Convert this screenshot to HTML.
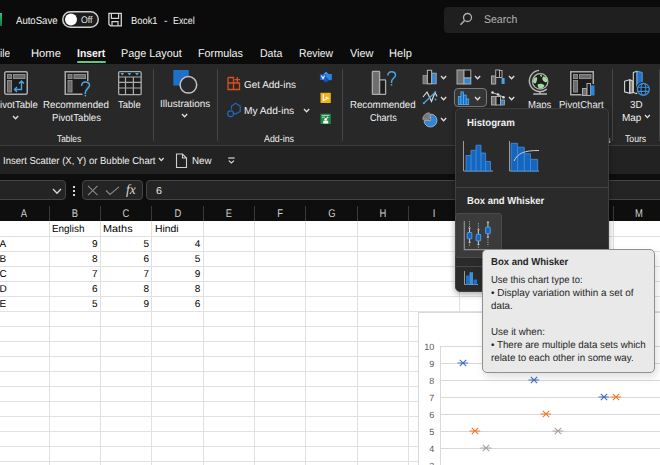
<!DOCTYPE html>
<html><head><meta charset="utf-8"><style>
html,body{margin:0;padding:0;width:660px;height:465px;overflow:hidden;background:#fff;font-family:"Liberation Sans",sans-serif}
.t{position:absolute;line-height:1;white-space:nowrap;text-rendering:geometricPrecision}
.r{position:absolute}
.s{position:absolute;overflow:visible}
</style></head><body>
<div class="r" style="left:0px;top:0px;width:660px;height:64px;background:#0b0b0b;"></div>
<div class="r" style="left:0px;top:12.6px;width:2px;height:13.4px;background:linear-gradient(#2fc27d,#0f7a3f);"></div>
<div class="t" style="left:15.5px;top:16.11px;font-size:10.5px;color:#f2f2f2;font-weight:400;transform:scaleX(0.9117);transform-origin:0 0;">AutoSave</div>
<svg class="s" style="left:62px;top:11px;" width="37" height="17" viewBox="0 0 37 17"><rect x="0.75" y="0.75" width="35.5" height="15.5" rx="7.75" fill="#1c1c1c" stroke="#cfcfcf" stroke-width="1.5"/><circle cx="9" cy="8.5" r="6" fill="#fff"/></svg>
<div class="t" style="left:81.0px;top:16.47px;font-size:9.6px;color:#e8e8e8;font-weight:400;transform:scaleX(0.9075);transform-origin:0 0;">Off</div>
<svg class="s" style="left:107px;top:12px;" width="16" height="16" viewBox="0 0 16 16"><path d="M1.9 1.4 H14.3 V13.8 H3.5 L1.9 12.2 Z" fill="none" stroke="#d6d6d6" stroke-width="1.3"/><path d="M4.4 1.4 V6.4 H11.6 V1.4" fill="none" stroke="#d6d6d6" stroke-width="1.2"/><path d="M5 13.8 V9.6 H11 V13.8" fill="none" stroke="#d6d6d6" stroke-width="1.2"/></svg>
<div class="t" style="left:131.0px;top:16.58px;font-size:10.3px;color:#f2f2f2;font-weight:400;transform:scaleX(0.9075);transform-origin:0 0;">Book1</div>
<div class="t" style="left:164.0px;top:16.58px;font-size:10.3px;color:#f2f2f2;font-weight:400;transform:scaleX(1.0143);transform-origin:0 0;">-</div>
<div class="t" style="left:173.3px;top:16.58px;font-size:10.3px;color:#f2f2f2;font-weight:400;transform:scaleX(0.8617);transform-origin:0 0;">Excel</div>
<div class="r" style="left:444px;top:7px;width:230px;height:25.5px;background:#1f1f1f;border-radius:4px"></div>
<svg class="s" style="left:459px;top:12px;" width="14" height="15" viewBox="0 0 14 15"><circle cx="8.5" cy="5.5" r="4" fill="none" stroke="#b0b0b0" stroke-width="1.3"/><path d="M5.6 8.4 L1.5 12.8" stroke="#b0b0b0" stroke-width="1.4"/></svg>
<div class="t" style="left:483.7px;top:14.92px;font-size:11.2px;color:#b4b4b4;font-weight:400;transform:scaleX(0.9379);transform-origin:0 0;">Search</div>
<div class="t" style="left:0.0px;top:49.33px;font-size:11.3px;color:#f4f4f4;font-weight:400;transform:scaleX(0.885);transform-origin:0 0;">ile</div>
<div class="t" style="left:31.0px;top:49.33px;font-size:11.3px;color:#f4f4f4;font-weight:400;transform:scaleX(0.9943);transform-origin:0 0;">Home</div>
<div class="t" style="left:77.0px;top:49.33px;font-size:11.3px;color:#f4f4f4;font-weight:700;transform:scaleX(0.9191);transform-origin:0 0;">Insert</div>
<div class="t" style="left:121.3px;top:49.33px;font-size:11.3px;color:#f4f4f4;font-weight:400;transform:scaleX(0.9567);transform-origin:0 0;">Page Layout</div>
<div class="t" style="left:198.3px;top:49.33px;font-size:11.3px;color:#f4f4f4;font-weight:400;transform:scaleX(0.955);transform-origin:0 0;">Formulas</div>
<div class="t" style="left:259.7px;top:49.33px;font-size:11.3px;color:#f4f4f4;font-weight:400;transform:scaleX(0.9331);transform-origin:0 0;">Data</div>
<div class="t" style="left:298.9px;top:49.33px;font-size:11.3px;color:#f4f4f4;font-weight:400;transform:scaleX(0.92);transform-origin:0 0;">Review</div>
<div class="t" style="left:349.5px;top:49.33px;font-size:11.3px;color:#f4f4f4;font-weight:400;transform:scaleX(0.9673);transform-origin:0 0;">View</div>
<div class="t" style="left:388.8px;top:49.33px;font-size:11.3px;color:#f4f4f4;font-weight:400;transform:scaleX(0.9818);transform-origin:0 0;">Help</div>
<div class="r" style="left:77px;top:60.5px;width:29px;height:2px;background:#5fc97f;border-radius:1px"></div>
<div class="r" style="left:0px;top:64px;width:660px;height:81px;background:#282828;"></div>
<div class="r" style="left:0px;top:145px;width:660px;height:1px;background:#3c3c3c;"></div>
<div class="r" style="left:153px;top:69px;width:1px;height:72px;background:#454545;"></div>
<div class="r" style="left:217px;top:69px;width:1px;height:72px;background:#454545;"></div>
<div class="r" style="left:341.5px;top:69px;width:1px;height:72px;background:#454545;"></div>
<div class="r" style="left:612px;top:69px;width:1px;height:72px;background:#454545;"></div>
<div class="r" style="left:659px;top:69px;width:1px;height:72px;background:#454545;"></div>
<svg class="s" style="left:3px;top:70px;" width="27" height="27" viewBox="0 0 27 27"><rect x="1.75" y="1.75" width="22.5" height="22.5" rx="1.5" fill="#1c1c1c" stroke="#ababab" stroke-width="1.5"/><rect x="4.5" y="4.5" width="4" height="4" fill="#6b6b6b" stroke="#8a8a8a" stroke-width="1"/><rect x="10.5" y="4.5" width="11.5" height="4" fill="#6b6b6b" stroke="#8a8a8a" stroke-width="1"/><rect x="4.5" y="10.5" width="4" height="11.5" fill="#6b6b6b" stroke="#8a8a8a" stroke-width="1"/><path d="M18.5 11 V19.5 H12 M16 13.5 L18.5 11 L21 13.5 M14 17 L11.5 19.5 L14 22" fill="none" stroke="#4ba3e3" stroke-width="1.4"/></svg>
<svg class="s" style="left:63px;top:70px;" width="30" height="28" viewBox="0 0 30 28"><path d="M19.5 24.25 H2.25 V1.75 H24.75 V11" fill="#1c1c1c" stroke="#ababab" stroke-width="1.5"/><rect x="5" y="4.5" width="4" height="4" fill="#6b6b6b" stroke="#8a8a8a" stroke-width="1"/><rect x="11" y="4.5" width="11.5" height="4" fill="#6b6b6b" stroke="#8a8a8a" stroke-width="1"/><rect x="5" y="10.5" width="4" height="11.5" fill="#6b6b6b" stroke="#8a8a8a" stroke-width="1"/><path d="M18.6 16 C18.6 13 20.5 12 22.5 12 C24.8 12 26.5 13.5 26.5 15.6 C26.5 18 22.4 19 22.4 22.5 V24" fill="none" stroke="#4ba3e3" stroke-width="1.5"/><circle cx="22.4" cy="25.6" r="0.9" fill="#4ba3e3"/></svg>
<svg class="s" style="left:117px;top:70px;" width="26" height="27" viewBox="0 0 26 27"><rect x="1.65" y="1.65" width="22.5" height="23" rx="1.2" fill="#1c1c1c" stroke="#ababab" stroke-width="1.3"/><path d="M1.5 7 H24.3 M1.5 12.4 H24.3 M1.5 18 H24.3 M8.5 7 V24.6 M16.4 7 V24.6" stroke="#ababab" stroke-width="1.2"/><path d="M3.3 3 H7.3 L5.3 5.6 Z M10.4 3 H14.4 L12.4 5.6 Z M18 3 H22 L20 5.6 Z" fill="#4ba3e3"/></svg>
<svg class="s" style="left:172px;top:69px;" width="27" height="26" viewBox="0 0 27 26"><rect x="1.3" y="1" width="15.5" height="15.5" fill="#1f70c8"/><circle cx="16.4" cy="15.8" r="8.3" fill="#282828" stroke="#c4c4c4" stroke-width="1.5"/></svg>
<svg class="s" style="left:226px;top:76px;" width="16" height="15" viewBox="0 0 16 15"><path d="M2 7 H7.5 V13.5 H2 Z M2 1.5 H7.5 V7 M7.5 7 H13.5 V13.5 H7.5 M2 1.5 V7" fill="none" stroke="#d9501e" stroke-width="1.3"/><path d="M11.3 1 V6.5 M8.6 3.7 H14" stroke="#d9501e" stroke-width="1.3"/></svg>
<svg class="s" style="left:226px;top:102px;" width="16" height="16" viewBox="0 0 16 16"><path d="M9.5 1.3 L14.2 4 V9.4 L9.5 12.1 L7 10.7 M5.5 7.6 V4 L9.5 1.3" fill="none" stroke="#1f6bbf" stroke-width="1.15"/><circle cx="4.6" cy="11.7" r="2.9" fill="none" stroke="#1f6bbf" stroke-width="1.15"/></svg>
<svg class="s" style="left:319px;top:71px;" width="14" height="13" viewBox="0 0 14 13"><path d="M7 0.7 L10.2 3.6 L7 6.5 L3.8 3.6 Z" fill="#3ea2f2"/><rect x="7" y="3" width="5.8" height="6.2" fill="#2a86e6"/><path d="M7 6 L10.2 8.9 L7 11.8 L3.8 8.9 Z" fill="#1553b8"/><rect x="0.9" y="3.2" width="6.2" height="5.7" rx="0.5" fill="#1b5fcc"/><path d="M2.4 4.5 L4 7.8 L5.6 4.5" fill="none" stroke="#f0f4ff" stroke-width="1.1"/></svg>
<svg class="s" style="left:320px;top:92px;" width="11" height="12" viewBox="0 0 11 12"><rect x="0.5" y="0.8" width="10.3" height="10.3" rx="0.5" fill="#f2b318"/><path d="M3.3 2.3 V8.6 L8 6.3 L5.6 5.1" fill="none" stroke="#fff" stroke-width="1.2"/></svg>
<svg class="s" style="left:320px;top:113px;" width="11" height="12" viewBox="0 0 11 12"><rect x="0.5" y="0.8" width="10.3" height="10.3" rx="0.5" fill="#1f8a4c"/><path d="M1.8 2.4 H9.4 M1.8 4.2 H5 M7.5 3.5 V5.5 M6.5 4.5 H8.5" stroke="#dff3e7" stroke-width="0.7"/><circle cx="5.7" cy="6.2" r="1.3" fill="#fff"/><path d="M3.2 10.6 V8.6 C3.2 7.8 4 7.4 5.7 7.4 C7.4 7.4 8.2 7.8 8.2 8.6 V10.6 Z" fill="#fff"/></svg>
<svg class="s" style="left:371px;top:70px;" width="26" height="26" viewBox="0 0 26 26"><rect x="1.4" y="1.4" width="7.2" height="23" rx="0.6" fill="#6e6e6e" stroke="#ababab" stroke-width="1.3"/><rect x="8.6" y="9.8" width="6" height="14.6" rx="0.6" fill="#1c1c1c" stroke="#ababab" stroke-width="1.3"/><path d="M16.8 5.5 C16.8 3 18.5 1.8 20.6 1.8 C23 1.8 24.5 3.3 24.5 5.3 C24.5 7.8 20.5 8.5 20.5 12 V13" fill="none" stroke="#4ba3e3" stroke-width="1.5"/><circle cx="20.5" cy="14.8" r="0.9" fill="#4ba3e3"/></svg>
<svg class="s" style="left:422px;top:69px;" width="16" height="16" viewBox="0 0 16 16"><rect x="1" y="6.5" width="4.2" height="8.3" fill="#777" stroke="#999" stroke-width="0.8"/><rect x="5.4" y="1.3" width="4.2" height="13.5" fill="#1c1c1c" stroke="#ababab" stroke-width="1.1"/><rect x="9.8" y="4.2" width="4.4" height="10.6" fill="#2f86d8" stroke="#ababab" stroke-width="0.9"/></svg>
<svg class="s" style="left:439.9px;top:75.0px;" width="7.2" height="4.8" viewBox="0 0 7.2 4.8"><path d="M1 1 L3.6 3.8 L6.2 1" fill="none" stroke="#e0e0e0" stroke-width="1.3"/></svg>
<svg class="s" style="left:422px;top:90px;" width="16" height="16" viewBox="0 0 16 16"><path d="M1 7 L5 2 L9.5 11.5 L13 2.5 L15 6.5" fill="none" stroke="#d8d8d8" stroke-width="1.2"/><path d="M1.5 13.5 L14 1.5" stroke="#4ba3e3" stroke-width="1.3"/><circle cx="1.8" cy="13.2" r="1" fill="#4ba3e3"/><circle cx="13.5" cy="9.5" r="1" fill="#4ba3e3"/></svg>
<svg class="s" style="left:439.9px;top:96.0px;" width="7.2" height="4.8" viewBox="0 0 7.2 4.8"><path d="M1 1 L3.6 3.8 L6.2 1" fill="none" stroke="#e0e0e0" stroke-width="1.3"/></svg>
<svg class="s" style="left:422px;top:112px;" width="16" height="16" viewBox="0 0 16 16"><path d="M7.3 7.3 V0.8 A6.5 6.5 0 0 0 0.8 7.3 Z" fill="#777" stroke="#aaa" stroke-width="0.8"/><path d="M8.6 2 A6.5 6.5 0 1 1 2 8.6 H8.6 Z" fill="#2f86d8" stroke="#bbb" stroke-width="0.8"/></svg>
<svg class="s" style="left:439.9px;top:116.69999999999999px;" width="7.2" height="4.8" viewBox="0 0 7.2 4.8"><path d="M1 1 L3.6 3.8 L6.2 1" fill="none" stroke="#e0e0e0" stroke-width="1.3"/></svg>
<svg class="s" style="left:456px;top:69px;" width="16" height="16" viewBox="0 0 16 16"><rect x="1" y="1" width="7" height="14" fill="#6e6e6e" stroke="#ababab" stroke-width="1"/><rect x="8" y="1" width="6.8" height="8" fill="#1c1c1c" stroke="#ababab" stroke-width="1"/><rect x="8" y="9" width="6.8" height="6" fill="#2f86d8" stroke="#ababab" stroke-width="1"/></svg>
<svg class="s" style="left:474.4px;top:75.0px;" width="7.2" height="4.8" viewBox="0 0 7.2 4.8"><path d="M1 1 L3.6 3.8 L6.2 1" fill="none" stroke="#e0e0e0" stroke-width="1.3"/></svg>
<svg class="s" style="left:490px;top:69px;" width="16" height="16" viewBox="0 0 16 16"><rect x="1.5" y="7" width="4.2" height="8" fill="#6e6e6e" stroke="#ababab" stroke-width="1"/><rect x="5.7" y="1" width="3.8" height="7.5" fill="#1c1c1c" stroke="#ababab" stroke-width="1"/><rect x="9.5" y="1.5" width="2.5" height="7" fill="#1c1c1c" stroke="#ababab" stroke-width="1"/><rect x="11.6" y="9" width="3" height="6" fill="#4ba3e3"/></svg>
<svg class="s" style="left:508.4px;top:75.0px;" width="7.2" height="4.8" viewBox="0 0 7.2 4.8"><path d="M1 1 L3.6 3.8 L6.2 1" fill="none" stroke="#e0e0e0" stroke-width="1.3"/></svg>
<div class="r" style="left:454.3px;top:88.2px;width:32.3px;height:19.2px;background:#353535;border:1px solid #7a7a7a;border-radius:4px;box-sizing:border-box"></div>
<svg class="s" style="left:457px;top:90px;" width="14" height="16" viewBox="0 0 14 16"><rect x="1.3" y="6.6" width="2.6" height="8" fill="#1a6cc0" stroke="#5ab0f0" stroke-width="0.8"/><rect x="3.9" y="1.9" width="2.6" height="12.7" fill="#1a6cc0" stroke="#5ab0f0" stroke-width="0.8"/><rect x="6.5" y="5.1" width="2.7" height="9.5" fill="#1a6cc0" stroke="#5ab0f0" stroke-width="0.8"/><rect x="9.2" y="9" width="2.5" height="5.6" fill="#1a6cc0" stroke="#5ab0f0" stroke-width="0.8"/></svg>
<svg class="s" style="left:474.4px;top:96.1px;" width="7.2" height="4.8" viewBox="0 0 7.2 4.8"><path d="M1 1 L3.6 3.8 L6.2 1" fill="none" stroke="#e0e0e0" stroke-width="1.3"/></svg>
<svg class="s" style="left:490px;top:90px;" width="16" height="16" viewBox="0 0 16 16"><rect x="1.5" y="6.5" width="4.5" height="8.5" fill="#6e6e6e" stroke="#ababab" stroke-width="1"/><rect x="6" y="6.5" width="4.5" height="8.5" fill="#1c1c1c" stroke="#ababab" stroke-width="1"/><rect x="10.5" y="10" width="4" height="5" fill="#2f86d8" stroke="#ababab" stroke-width="0.8"/><path d="M2 2.5 L8 4.5 L14 7.5" stroke="#c8c8c8" stroke-width="1"/><circle cx="2.5" cy="2.5" r="1.3" fill="#ddd"/><circle cx="8" cy="4.5" r="1.3" fill="#ddd"/><circle cx="13.5" cy="7.3" r="1.3" fill="#ddd"/></svg>
<svg class="s" style="left:508.4px;top:96.1px;" width="7.2" height="4.8" viewBox="0 0 7.2 4.8"><path d="M1 1 L3.6 3.8 L6.2 1" fill="none" stroke="#e0e0e0" stroke-width="1.3"/></svg>
<svg class="s" style="left:526px;top:68px;" width="26" height="28" viewBox="0 0 26 28"><circle cx="14.2" cy="13.4" r="7.7" fill="#1e1e1e" stroke="#b8b8b8" stroke-width="1.2"/><path d="M13.1 2.4 A10.6 10.6 0 1 0 20.8 21.1" fill="none" stroke="#b8b8b8" stroke-width="1.4"/><path d="M14 23.6 V26 M7.2 26.1 H21" stroke="#b8b8b8" stroke-width="1.5"/><path d="M14 7 C15.5 6.5 16.5 7.2 16 8.5 C15 9 14.2 8.5 14 7Z M17 8.5 C19 8 21.3 10 21.5 12.5 C21 15 19 14.5 17.5 13 C16 12 16 10 17 8.5Z M7.5 11 C8.5 9.5 10 9 11 9.5 C11.5 11 10.8 13 10 15 C9 16 7.5 15 7 13.5Z M11.5 16.5 C13.5 15.5 17 15.5 18.5 17.5 C18 19.5 16 20.8 13.5 20.6 C12 19.5 11.5 18 11.5 16.5Z" fill="#9fdc9f"/></svg>
<svg class="s" style="left:569px;top:70px;" width="27" height="27" viewBox="0 0 27 27"><path d="M12.5 24.75 H1.75 V1.75 H24.25 V14" fill="#1c1c1c" stroke="#ababab" stroke-width="1.5"/><rect x="4.5" y="4.5" width="4" height="4" fill="#6b6b6b" stroke="#8a8a8a" stroke-width="1"/><rect x="10.5" y="4.5" width="11.5" height="4" fill="#6b6b6b" stroke="#8a8a8a" stroke-width="1"/><rect x="4.5" y="10.5" width="4" height="11.5" fill="#6b6b6b" stroke="#8a8a8a" stroke-width="1"/><rect x="13.5" y="18.5" width="4.5" height="7" fill="#6e6e6e" stroke="#ababab" stroke-width="1"/><rect x="18" y="13.5" width="3.5" height="12" fill="#1c1c1c" stroke="#ababab" stroke-width="1"/><rect x="21.5" y="15.5" width="4" height="10" fill="#2f86d8"/></svg>
<svg class="s" style="left:620px;top:68px;" width="32" height="30" viewBox="0 0 32 30"><path d="M4.6 13.2 L9.7 11.7 V25.2 L4.6 23.9 Z" fill="#1c1c1c" stroke="#d4d4d4" stroke-width="1.1" stroke-linejoin="round"/><path d="M9.7 11.7 L12.9 12.9 V24.6 L9.7 25.2 Z" fill="#7a7a7a" stroke="#d4d4d4" stroke-width="1.1" stroke-linejoin="round"/><path d="M13.3 4.5 L17.1 3.2 V25.8 L13.3 24.6 Z" fill="#1c1c1c" stroke="#d4d4d4" stroke-width="1.1" stroke-linejoin="round"/><path d="M17.1 3.2 L22.2 4.5 V19 L17.1 22 Z" fill="#1f72c8" stroke="#5aa7ee" stroke-width="0.9" stroke-linejoin="round"/><circle cx="23.4" cy="21.3" r="6.6" fill="#1c1c1c" stroke="#282828" stroke-width="2"/><circle cx="23.4" cy="21.3" r="5.9" fill="#1c1c1c" stroke="#3d8fdb" stroke-width="1.3"/><ellipse cx="23.4" cy="21.3" rx="2.4" ry="5.9" fill="none" stroke="#3d8fdb" stroke-width="1.1"/><path d="M17.8 19.2 H29 M17.8 23.4 H29" stroke="#3d8fdb" stroke-width="1.1"/></svg>
<div class="t" style="left:0.0px;top:100.65px;font-size:10.1px;color:#f0f0f0;font-weight:400;transform:scaleX(0.9487);transform-origin:0 0;">ivotTable</div>
<svg class="s" style="left:11.9px;top:114.6px;" width="7.2" height="4.8" viewBox="0 0 7.2 4.8"><path d="M1 1 L3.6 3.8 L6.2 1" fill="none" stroke="#e0e0e0" stroke-width="1.3"/></svg>
<div class="t" style="left:42.9px;top:100.65px;font-size:10.1px;color:#f0f0f0;font-weight:400;transform:scaleX(0.9624);transform-origin:0 0;">Recommended</div>
<div class="t" style="left:52.0px;top:113.65px;font-size:10.1px;color:#f0f0f0;font-weight:400;transform:scaleX(0.9485);transform-origin:0 0;">PivotTables</div>
<div class="t" style="left:118.0px;top:100.65px;font-size:10.1px;color:#f0f0f0;font-weight:400;transform:scaleX(0.9404);transform-origin:0 0;">Table</div>
<div class="t" style="left:56.7px;top:134.60px;font-size:9.8px;color:#f0f0f0;font-weight:400;transform:scaleX(0.8545);transform-origin:0 0;">Tables</div>
<div class="t" style="left:159.8px;top:99.65px;font-size:10.1px;color:#f0f0f0;font-weight:400;transform:scaleX(0.9823);transform-origin:0 0;">Illustrations</div>
<svg class="s" style="left:181.0px;top:113.3px;" width="7.2" height="4.8" viewBox="0 0 7.2 4.8"><path d="M1 1 L3.6 3.8 L6.2 1" fill="none" stroke="#e0e0e0" stroke-width="1.3"/></svg>
<div class="t" style="left:244.2px;top:80.75px;font-size:10.1px;color:#f0f0f0;font-weight:400;transform:scaleX(0.9835);transform-origin:0 0;">Get Add-ins</div>
<div class="t" style="left:244.0px;top:107.25px;font-size:10.1px;color:#f0f0f0;font-weight:400;transform:scaleX(1.0051);transform-origin:0 0;">My Add-ins</div>
<svg class="s" style="left:303.0px;top:107.6px;" width="7.2" height="4.8" viewBox="0 0 7.2 4.8"><path d="M1 1 L3.6 3.8 L6.2 1" fill="none" stroke="#e0e0e0" stroke-width="1.3"/></svg>
<div class="t" style="left:264.2px;top:134.60px;font-size:9.8px;color:#f0f0f0;font-weight:400;transform:scaleX(0.903);transform-origin:0 0;">Add-ins</div>
<div class="t" style="left:350.4px;top:100.85px;font-size:10.1px;color:#f0f0f0;font-weight:400;transform:scaleX(0.958);transform-origin:0 0;">Recommended</div>
<div class="t" style="left:370.0px;top:113.95px;font-size:10.1px;color:#f0f0f0;font-weight:400;transform:scaleX(0.8976);transform-origin:0 0;">Charts</div>
<div class="t" style="left:528.0px;top:100.95px;font-size:10.1px;color:#f0f0f0;font-weight:400;transform:scaleX(0.9476);transform-origin:0 0;">Maps</div>
<div class="t" style="left:559.2px;top:100.95px;font-size:10.1px;color:#f0f0f0;font-weight:400;transform:scaleX(0.9456);transform-origin:0 0;">PivotChart</div>
<div class="t" style="left:630.0px;top:100.85px;font-size:10.1px;color:#f0f0f0;font-weight:400;transform:scaleX(0.9746);transform-origin:0 0;">3D</div>
<div class="t" style="left:621.8px;top:113.65px;font-size:10.1px;color:#f0f0f0;font-weight:400;transform:scaleX(0.9876);transform-origin:0 0;">Map</div>
<svg class="s" style="left:643.6px;top:114.3px;" width="6.8" height="4.6" viewBox="0 0 6.8 4.6"><path d="M1 1 L3.4 3.6 L5.8 1" fill="none" stroke="#e0e0e0" stroke-width="1.3"/></svg>
<div class="t" style="left:625.0px;top:134.60px;font-size:9.8px;color:#f0f0f0;font-weight:400;transform:scaleX(0.8848);transform-origin:0 0;">Tours</div>
<div class="t" style="right:49.5px;top:135.77px;font-size:8.9px;color:#f0f0f0;font-weight:400;">Charts</div>
<div class="r" style="left:0px;top:146px;width:660px;height:28px;background:#222222;"></div>
<div class="t" style="left:3.4px;top:156.65px;font-size:10.1px;color:#f0f0f0;font-weight:400;transform:scaleX(0.9417);transform-origin:0 0;">Insert Scatter (X, Y) or Bubble Chart</div>
<svg class="s" style="left:158.29999999999998px;top:157.29999999999998px;" width="6.6" height="4.6" viewBox="0 0 6.6 4.6"><path d="M1 1 L3.3 3.6 L5.6 1" fill="none" stroke="#e0e0e0" stroke-width="1.3"/></svg>
<svg class="s" style="left:175px;top:153px;" width="13" height="16" viewBox="0 0 13 16"><path d="M1.5 1 H7.5 L11.5 5 V14.5 H1.5 Z M7.5 1 V5 H11.5" fill="none" stroke="#d0d0d0" stroke-width="1.1"/></svg>
<div class="t" style="left:191.6px;top:156.65px;font-size:10.1px;color:#f0f0f0;font-weight:400;transform:scaleX(0.9629);transform-origin:0 0;">New</div>
<svg class="s" style="left:227px;top:156px;" width="9" height="9" viewBox="0 0 9 9"><path d="M1.2 2 H7.6" stroke="#d8d8d8" stroke-width="1.2"/><path d="M1.8 4.6 L4.4 7 L7 4.6" fill="none" stroke="#d8d8d8" stroke-width="1.2"/></svg>
<div class="r" style="left:0px;top:174px;width:660px;height:47px;background:#0e0e0e;"></div>
<div class="r" style="left:-6px;top:180.3px;width:71.5px;height:20px;background:#242424;border:1px solid #444444;border-radius:4px;box-sizing:border-box"></div>
<svg class="s" style="left:52.0px;top:188.20000000000002px;" width="10" height="6.2" viewBox="0 0 10 6.2"><path d="M1 1 L5.0 5.2 L9 1" fill="none" stroke="#d8d8d8" stroke-width="1.3"/></svg>
<svg class="s" style="left:72px;top:185px;" width="4" height="12" viewBox="0 0 4 12"><rect x="1" y="1" width="2" height="2" fill="#d8d8d8"/><rect x="1" y="5" width="2" height="2" fill="#d8d8d8"/><rect x="1" y="9" width="2" height="2" fill="#d8d8d8"/></svg>
<div class="r" style="left:82.3px;top:180.3px;width:60.6px;height:20px;background:#242424;border:1px solid #444444;border-radius:4px;box-sizing:border-box"></div>
<svg class="s" style="left:87px;top:185px;" width="12" height="11" viewBox="0 0 12 11"><path d="M1 0.8 L10.5 10.2 M10.5 0.8 L1 10.2" stroke="#8a8a8a" stroke-width="1.1"/></svg>
<svg class="s" style="left:105px;top:186px;" width="15" height="10" viewBox="0 0 15 10"><path d="M1 4.5 L5 8.5 L14 0.8" fill="none" stroke="#8a8a8a" stroke-width="1.1"/></svg>
<div class="t" style="left:125.8px;top:183.95px;font-size:14px;color:#d8d8d8;font-weight:400;font-family:'Liberation Serif',serif;transform:scaleX(0.95);transform-origin:0 0;"><i>fx</i></div>
<div class="r" style="left:146.2px;top:180.3px;width:520px;height:20px;background:#242424;border:1px solid #444444;border-radius:4px;box-sizing:border-box"></div>
<div class="t" style="left:155.8px;top:186.75px;font-size:10.1px;color:#e8e8e8;font-weight:400;transform:scaleX(1.0704);transform-origin:0 0;">6</div>
<div class="r" style="left:49px;top:205.5px;width:1px;height:15px;background:#3a3a3a;"></div>
<div class="r" style="left:100px;top:205.5px;width:1px;height:15px;background:#3a3a3a;"></div>
<div class="r" style="left:151px;top:205.5px;width:1px;height:15px;background:#3a3a3a;"></div>
<div class="r" style="left:203px;top:205.5px;width:1px;height:15px;background:#3a3a3a;"></div>
<div class="r" style="left:254px;top:205.5px;width:1px;height:15px;background:#3a3a3a;"></div>
<div class="r" style="left:305px;top:205.5px;width:1px;height:15px;background:#3a3a3a;"></div>
<div class="r" style="left:357px;top:205.5px;width:1px;height:15px;background:#3a3a3a;"></div>
<div class="r" style="left:408px;top:205.5px;width:1px;height:15px;background:#3a3a3a;"></div>
<div class="r" style="left:459px;top:205.5px;width:1px;height:15px;background:#3a3a3a;"></div>
<div class="r" style="left:511px;top:205.5px;width:1px;height:15px;background:#3a3a3a;"></div>
<div class="r" style="left:562px;top:205.5px;width:1px;height:15px;background:#3a3a3a;"></div>
<div class="r" style="left:613px;top:205.5px;width:1px;height:15px;background:#3a3a3a;"></div>
<div class="r" style="left:664px;top:205.5px;width:1px;height:15px;background:#3a3a3a;"></div>
<div class="t" style="left:-26.0px;width:100px;text-align:center;top:208.62px;font-size:11.2px;color:#cfcfcf;font-weight:400;transform:scaleX(0.84);transform-origin:50% 0;">A</div>
<div class="t" style="left:25.0px;width:100px;text-align:center;top:208.62px;font-size:11.2px;color:#cfcfcf;font-weight:400;transform:scaleX(0.84);transform-origin:50% 0;">B</div>
<div class="t" style="left:76.0px;width:100px;text-align:center;top:208.62px;font-size:11.2px;color:#cfcfcf;font-weight:400;transform:scaleX(0.84);transform-origin:50% 0;">C</div>
<div class="t" style="left:127.5px;width:100px;text-align:center;top:208.62px;font-size:11.2px;color:#cfcfcf;font-weight:400;transform:scaleX(0.84);transform-origin:50% 0;">D</div>
<div class="t" style="left:179.0px;width:100px;text-align:center;top:208.62px;font-size:11.2px;color:#cfcfcf;font-weight:400;transform:scaleX(0.84);transform-origin:50% 0;">E</div>
<div class="t" style="left:230.0px;width:100px;text-align:center;top:208.62px;font-size:11.2px;color:#cfcfcf;font-weight:400;transform:scaleX(0.84);transform-origin:50% 0;">F</div>
<div class="t" style="left:281.5px;width:100px;text-align:center;top:208.62px;font-size:11.2px;color:#cfcfcf;font-weight:400;transform:scaleX(0.84);transform-origin:50% 0;">G</div>
<div class="t" style="left:333.0px;width:100px;text-align:center;top:208.62px;font-size:11.2px;color:#cfcfcf;font-weight:400;transform:scaleX(0.84);transform-origin:50% 0;">H</div>
<div class="t" style="left:384.0px;width:100px;text-align:center;top:208.62px;font-size:11.2px;color:#cfcfcf;font-weight:400;transform:scaleX(0.84);transform-origin:50% 0;">I</div>
<div class="t" style="left:435.5px;width:100px;text-align:center;top:208.62px;font-size:11.2px;color:#cfcfcf;font-weight:400;transform:scaleX(0.84);transform-origin:50% 0;">J</div>
<div class="t" style="left:487.0px;width:100px;text-align:center;top:208.62px;font-size:11.2px;color:#cfcfcf;font-weight:400;transform:scaleX(0.84);transform-origin:50% 0;">K</div>
<div class="t" style="left:538.0px;width:100px;text-align:center;top:208.62px;font-size:11.2px;color:#cfcfcf;font-weight:400;transform:scaleX(0.84);transform-origin:50% 0;">L</div>
<div class="t" style="left:589.0px;width:100px;text-align:center;top:208.62px;font-size:11.2px;color:#cfcfcf;font-weight:400;transform:scaleX(0.84);transform-origin:50% 0;">M</div>
<div class="t" style="left:640.125px;width:100px;text-align:center;top:208.62px;font-size:11.2px;color:#cfcfcf;font-weight:400;transform:scaleX(0.84);transform-origin:50% 0;">N</div>
<div class="r" style="left:0px;top:221px;width:660px;height:244px;background:#ffffff;"></div>
<div class="r" style="left:0px;top:236px;width:660px;height:1px;background:#e1e1e1;"></div>
<div class="r" style="left:0px;top:251px;width:660px;height:1px;background:#e1e1e1;"></div>
<div class="r" style="left:0px;top:266px;width:660px;height:1px;background:#e1e1e1;"></div>
<div class="r" style="left:0px;top:281px;width:660px;height:1px;background:#e1e1e1;"></div>
<div class="r" style="left:0px;top:296px;width:660px;height:1px;background:#e1e1e1;"></div>
<div class="r" style="left:0px;top:311px;width:660px;height:1px;background:#e1e1e1;"></div>
<div class="r" style="left:0px;top:326px;width:660px;height:1px;background:#e1e1e1;"></div>
<div class="r" style="left:0px;top:341px;width:660px;height:1px;background:#e1e1e1;"></div>
<div class="r" style="left:0px;top:356px;width:660px;height:1px;background:#e1e1e1;"></div>
<div class="r" style="left:0px;top:371px;width:660px;height:1px;background:#e1e1e1;"></div>
<div class="r" style="left:0px;top:386px;width:660px;height:1px;background:#e1e1e1;"></div>
<div class="r" style="left:0px;top:401px;width:660px;height:1px;background:#e1e1e1;"></div>
<div class="r" style="left:0px;top:416px;width:660px;height:1px;background:#e1e1e1;"></div>
<div class="r" style="left:0px;top:431px;width:660px;height:1px;background:#e1e1e1;"></div>
<div class="r" style="left:0px;top:446px;width:660px;height:1px;background:#e1e1e1;"></div>
<div class="r" style="left:0px;top:461px;width:660px;height:1px;background:#e1e1e1;"></div>
<div class="r" style="left:49px;top:221px;width:1px;height:244px;background:#e1e1e1;"></div>
<div class="r" style="left:100px;top:221px;width:1px;height:244px;background:#e1e1e1;"></div>
<div class="r" style="left:151px;top:221px;width:1px;height:244px;background:#e1e1e1;"></div>
<div class="r" style="left:203px;top:221px;width:1px;height:244px;background:#e1e1e1;"></div>
<div class="r" style="left:254px;top:221px;width:1px;height:244px;background:#e1e1e1;"></div>
<div class="r" style="left:305px;top:221px;width:1px;height:244px;background:#e1e1e1;"></div>
<div class="r" style="left:357px;top:221px;width:1px;height:244px;background:#e1e1e1;"></div>
<div class="r" style="left:408px;top:221px;width:1px;height:244px;background:#e1e1e1;"></div>
<div class="r" style="left:459px;top:221px;width:1px;height:244px;background:#e1e1e1;"></div>
<div class="r" style="left:511px;top:221px;width:1px;height:244px;background:#e1e1e1;"></div>
<div class="r" style="left:562px;top:221px;width:1px;height:244px;background:#e1e1e1;"></div>
<div class="r" style="left:613px;top:221px;width:1px;height:244px;background:#e1e1e1;"></div>
<div class="r" style="left:664px;top:221px;width:1px;height:244px;background:#e1e1e1;"></div>
<div class="t" style="left:51.6px;top:225.45px;font-size:10.1px;color:#000;font-weight:400;transform:scaleX(0.978);transform-origin:0 0;">English</div>
<div class="t" style="left:103.1px;top:225.45px;font-size:10.1px;color:#000;font-weight:400;transform:scaleX(1.0755);transform-origin:0 0;">Maths</div>
<div class="t" style="left:154.5px;top:225.45px;font-size:10.1px;color:#000;font-weight:400;transform:scaleX(1.0292);transform-origin:0 0;">Hindi</div>
<div class="t" style="left:-0.5px;top:240.13px;font-size:10px;color:#000;font-weight:400;">A</div>
<div class="t" style="right:562.4px;top:240.13px;font-size:10px;color:#000;font-weight:400;">9</div>
<div class="t" style="right:511px;top:240.13px;font-size:10px;color:#000;font-weight:400;">5</div>
<div class="t" style="right:459.8px;top:240.13px;font-size:10px;color:#000;font-weight:400;">4</div>
<div class="t" style="left:-0.5px;top:255.14px;font-size:10px;color:#000;font-weight:400;">B</div>
<div class="t" style="right:562.4px;top:255.14px;font-size:10px;color:#000;font-weight:400;">8</div>
<div class="t" style="right:511px;top:255.14px;font-size:10px;color:#000;font-weight:400;">6</div>
<div class="t" style="right:459.8px;top:255.14px;font-size:10px;color:#000;font-weight:400;">5</div>
<div class="t" style="left:-0.5px;top:270.14px;font-size:10px;color:#000;font-weight:400;">C</div>
<div class="t" style="right:562.4px;top:270.14px;font-size:10px;color:#000;font-weight:400;">7</div>
<div class="t" style="right:511px;top:270.14px;font-size:10px;color:#000;font-weight:400;">7</div>
<div class="t" style="right:459.8px;top:270.14px;font-size:10px;color:#000;font-weight:400;">9</div>
<div class="t" style="left:-0.5px;top:285.14px;font-size:10px;color:#000;font-weight:400;">D</div>
<div class="t" style="right:562.4px;top:285.14px;font-size:10px;color:#000;font-weight:400;">6</div>
<div class="t" style="right:511px;top:285.14px;font-size:10px;color:#000;font-weight:400;">8</div>
<div class="t" style="right:459.8px;top:285.14px;font-size:10px;color:#000;font-weight:400;">8</div>
<div class="t" style="left:-0.5px;top:300.14px;font-size:10px;color:#000;font-weight:400;">E</div>
<div class="t" style="right:562.4px;top:300.14px;font-size:10px;color:#000;font-weight:400;">5</div>
<div class="t" style="right:511px;top:300.14px;font-size:10px;color:#000;font-weight:400;">9</div>
<div class="t" style="right:459.8px;top:300.14px;font-size:10px;color:#000;font-weight:400;">6</div>
<div class="r" style="left:418px;top:312px;width:260px;height:160px;background:#ffffff;border:1px solid #d9d9d9;box-sizing:border-box"></div>
<div class="r" style="left:440px;top:346px;width:230px;height:1px;background:#d9d9d9;"></div>
<div class="t" style="right:225.7px;top:343.18px;font-size:9px;color:#595959;font-weight:400;">10</div>
<div class="r" style="left:440px;top:363px;width:230px;height:1px;background:#d9d9d9;"></div>
<div class="t" style="right:225.7px;top:360.18px;font-size:9px;color:#595959;font-weight:400;">9</div>
<div class="r" style="left:440px;top:380px;width:230px;height:1px;background:#d9d9d9;"></div>
<div class="t" style="right:225.7px;top:377.18px;font-size:9px;color:#595959;font-weight:400;">8</div>
<div class="r" style="left:440px;top:397px;width:230px;height:1px;background:#d9d9d9;"></div>
<div class="t" style="right:225.7px;top:394.18px;font-size:9px;color:#595959;font-weight:400;">7</div>
<div class="r" style="left:440px;top:414px;width:230px;height:1px;background:#d9d9d9;"></div>
<div class="t" style="right:225.7px;top:411.18px;font-size:9px;color:#595959;font-weight:400;">6</div>
<div class="r" style="left:440px;top:431px;width:230px;height:1px;background:#d9d9d9;"></div>
<div class="t" style="right:225.7px;top:428.18px;font-size:9px;color:#595959;font-weight:400;">5</div>
<div class="r" style="left:440px;top:448px;width:230px;height:1px;background:#d9d9d9;"></div>
<div class="t" style="right:225.7px;top:445.18px;font-size:9px;color:#595959;font-weight:400;">4</div>
<div class="r" style="left:440px;top:465px;width:230px;height:1px;background:#d9d9d9;"></div>
<div class="t" style="right:225.7px;top:462.18px;font-size:9px;color:#595959;font-weight:400;">3</div>
<div class="r" style="left:440px;top:346px;width:1px;height:130px;background:#d9d9d9;"></div>
<svg class="s" style="left:457.2px;top:358.7px;" width="12" height="8" viewBox="0 0 12 8"><path d="M2.8 0.8 L9.2 7.2 M9.2 0.8 L2.8 7.2 M0.5 4 H11.2" stroke="#4472c4" stroke-width="1.15"/></svg>
<svg class="s" style="left:468.5px;top:426.7px;" width="12" height="8" viewBox="0 0 12 8"><path d="M2.8 0.8 L9.2 7.2 M9.2 0.8 L2.8 7.2 M0.5 4 H11.2" stroke="#ed7d31" stroke-width="1.15"/></svg>
<svg class="s" style="left:480.2px;top:443.7px;" width="12" height="8" viewBox="0 0 12 8"><path d="M2.8 0.8 L9.2 7.2 M9.2 0.8 L2.8 7.2 M0.5 4 H11.2" stroke="#a5a5a5" stroke-width="1.15"/></svg>
<svg class="s" style="left:527.5px;top:375.7px;" width="12" height="8" viewBox="0 0 12 8"><path d="M2.8 0.8 L9.2 7.2 M9.2 0.8 L2.8 7.2 M0.5 4 H11.2" stroke="#4472c4" stroke-width="1.15"/></svg>
<svg class="s" style="left:539.5px;top:409.7px;" width="12" height="8" viewBox="0 0 12 8"><path d="M2.8 0.8 L9.2 7.2 M9.2 0.8 L2.8 7.2 M0.5 4 H11.2" stroke="#ed7d31" stroke-width="1.15"/></svg>
<svg class="s" style="left:551.5px;top:426.7px;" width="12" height="8" viewBox="0 0 12 8"><path d="M2.8 0.8 L9.2 7.2 M9.2 0.8 L2.8 7.2 M0.5 4 H11.2" stroke="#a5a5a5" stroke-width="1.15"/></svg>
<svg class="s" style="left:598.4px;top:392.7px;" width="12" height="8" viewBox="0 0 12 8"><path d="M2.8 0.8 L9.2 7.2 M9.2 0.8 L2.8 7.2 M0.5 4 H11.2" stroke="#4472c4" stroke-width="1.15"/></svg>
<svg class="s" style="left:610.4px;top:392.7px;" width="12" height="8" viewBox="0 0 12 8"><path d="M2.8 0.8 L9.2 7.2 M9.2 0.8 L2.8 7.2 M0.5 4 H11.2" stroke="#ed7d31" stroke-width="1.15"/></svg>
<svg class="s" style="left:622.2px;top:358.7px;" width="12" height="8" viewBox="0 0 12 8"><path d="M2.8 0.8 L9.2 7.2 M9.2 0.8 L2.8 7.2 M0.5 4 H11.2" stroke="#a5a5a5" stroke-width="1.15"/></svg>
<div class="r" style="left:454.5px;top:108.2px;width:154px;height:183.4px;background:#2a2a2a;border:1px solid #3e3e3e;border-radius:5px;box-sizing:border-box;box-shadow:0 2px 6px rgba(0,0,0,.35)"></div>
<div class="t" style="left:467.0px;top:118.75px;font-size:10.1px;color:#f0f0f0;font-weight:700;transform:scaleX(0.9571);transform-origin:0 0;">Histogram</div>
<svg class="s" style="left:462px;top:140px;" width="32" height="33" viewBox="0 0 32 33"><path d="M1.5 1 V31 H31" fill="none" stroke="#9a9a9a" stroke-width="1"/><path d="M4 31 V15.5 H9 V10.3 H14 V5.2 H19 V13 H23.6 V21.4 H28.5 V31 Z" fill="#1666c0" stroke="#4f9be3" stroke-width="0.7"/><path d="M9 15.5 V31 M14 10.3 V31 M19 13 V31 M23.6 21.4 V31" stroke="#4f9be3" stroke-width="0.7"/></svg>
<svg class="s" style="left:508px;top:140px;" width="33" height="33" viewBox="0 0 33 33"><path d="M1.5 1 V31 H31" fill="none" stroke="#9a9a9a" stroke-width="1"/><path d="M3 31 V3.3 H9.6 V7.2 H16.3 V13.7 H22.5 V19.3 H29.7 V31 Z" fill="#1666c0" stroke="#4f9be3" stroke-width="0.7"/><path d="M9.6 7.2 V31 M16.3 13.7 V31 M22.5 19.3 V31" stroke="#4f9be3" stroke-width="0.7"/><path d="M6 21 C10 13 16 10.5 31 10.5" fill="none" stroke="#cfcfcf" stroke-width="1"/></svg>
<div class="r" style="left:455px;top:187px;width:153px;height:1px;background:#444444;"></div>
<div class="t" style="left:466.8px;top:197.25px;font-size:10.1px;color:#f0f0f0;font-weight:700;transform:scaleX(0.9443);transform-origin:0 0;">Box and Whisker</div>
<div class="r" style="left:455.4px;top:212.9px;width:46.2px;height:45.5px;background:#3b3b3b;border:1px solid #4a4a4a;border-radius:3px;box-sizing:border-box"></div>
<svg class="s" style="left:462px;top:219px;" width="40" height="33" viewBox="0 0 40 33"><path d="M2.3 2 V30.7 H38" fill="none" stroke="#8f8f8f" stroke-width="1.2"/><path d="M7.55 2.3 V9.0" stroke="#c8c8c8" stroke-width="0.9" stroke-dasharray="1 1.3"/><path d="M7.55 9.0 V13.5 M7.55 19.8 V23.3" stroke="#c8c8c8" stroke-width="1"/><path d="M6.449999999999999 9.0 H8.65 M6.449999999999999 23.3 H8.65" stroke="#c8c8c8" stroke-width="0.9"/><path d="M7.55 23.3 V27.5" stroke="#c8c8c8" stroke-width="0.9" stroke-dasharray="1 1.3"/><rect x="5.25" y="13.5" width="4.6" height="6.300000000000001" rx="0.6" fill="#1565c0" stroke="#5ab0f0" stroke-width="0.8"/><path d="M16.4 4.3 V10.8" stroke="#c8c8c8" stroke-width="0.9" stroke-dasharray="1 1.3"/><path d="M16.4 10.8 V15.3 M16.4 21.9 V25.4" stroke="#c8c8c8" stroke-width="1"/><path d="M15.299999999999999 10.8 H17.5 M15.299999999999999 25.4 H17.5" stroke="#c8c8c8" stroke-width="0.9"/><path d="M16.4 25.4 V29" stroke="#c8c8c8" stroke-width="0.9" stroke-dasharray="1 1.3"/><rect x="14.099999999999998" y="15.3" width="4.6" height="6.599999999999998" rx="0.6" fill="#1565c0" stroke="#5ab0f0" stroke-width="0.8"/><path d="M25.95 2 V3.5999999999999996" stroke="#c8c8c8" stroke-width="0.9" stroke-dasharray="1 1.3"/><path d="M25.95 3.5999999999999996 V8.1 M25.95 14.7 V18.2" stroke="#c8c8c8" stroke-width="1"/><path d="M24.849999999999998 3.5999999999999996 H27.05 M24.849999999999998 18.2 H27.05" stroke="#c8c8c8" stroke-width="0.9"/><path d="M25.95 18.2 V27.5" stroke="#c8c8c8" stroke-width="0.9" stroke-dasharray="1 1.3"/><rect x="23.65" y="8.1" width="4.6" height="6.6" rx="0.6" fill="#1565c0" stroke="#5ab0f0" stroke-width="0.8"/></svg>
<div class="r" style="left:455px;top:266px;width:153px;height:1px;background:#474747;"></div>
<svg class="s" style="left:463px;top:270px;" width="16" height="16" viewBox="0 0 16 16"><path d="M1.5 1 V14.5 H15" fill="none" stroke="#9a9a9a" stroke-width="1"/><rect x="3" y="5.5" width="3.5" height="9" fill="#1d72c9"/><rect x="6.5" y="2.2" width="3.5" height="12.3" fill="#3d8fe0"/><rect x="10.5" y="9.5" width="3.5" height="5" fill="#1d72c9"/></svg>
<div class="r" style="left:481.6px;top:249px;width:173.6px;height:123.6px;background:#e9e9e9;border:1px solid #8f8f8f;border-radius:5px;box-sizing:border-box;box-shadow:2px 4px 8px rgba(0,0,0,.13)"></div>
<div class="t" style="left:490.9px;top:258.35px;font-size:10.1px;color:#262626;font-weight:700;transform:scaleX(0.9443);transform-origin:0 0;">Box and Whisker</div>
<div class="t" style="left:491.3px;top:275.65px;font-size:10.1px;color:#262626;font-weight:400;transform:scaleX(0.9389);transform-origin:0 0;">Use this chart type to:</div>
<div class="t" style="left:491.3px;top:288.75px;font-size:10.1px;color:#262626;font-weight:400;transform:scaleX(0.9839);transform-origin:0 0;">• Display variation within a set of</div>
<div class="t" style="left:491px;top:301.85px;font-size:10.1px;color:#262626;font-weight:400;transform:scaleX(0.97);transform-origin:0 0;">data.</div>
<div class="t" style="left:491px;top:328.45px;font-size:10.1px;color:#262626;font-weight:400;transform:scaleX(0.97);transform-origin:0 0;">Use it when:</div>
<div class="t" style="left:491.3px;top:341.15px;font-size:10.1px;color:#262626;font-weight:400;transform:scaleX(0.967);transform-origin:0 0;">• There are multiple data sets which</div>
<div class="t" style="left:491.3px;top:353.85px;font-size:10.1px;color:#262626;font-weight:400;transform:scaleX(0.9641);transform-origin:0 0;">relate to each other in some way.</div>

</body></html>
